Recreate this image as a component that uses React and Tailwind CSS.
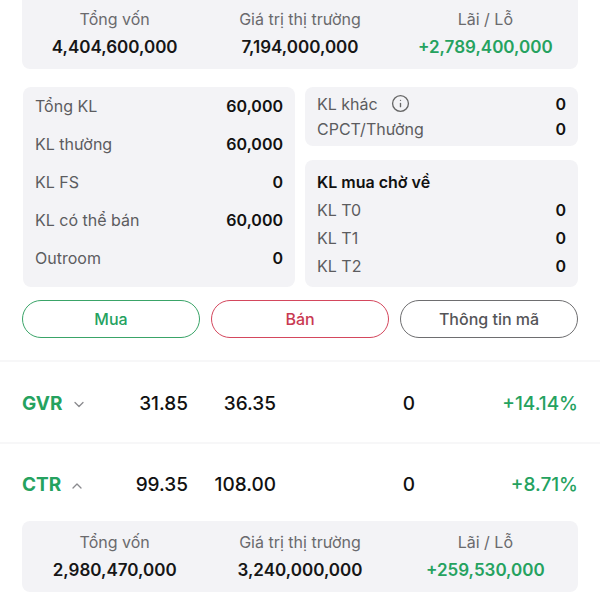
import React from 'react';
import { Info } from 'lucide-react';

const Chevron = ({ up }) => (
  <svg width="10" height="7" viewBox="0 0 10 7" className="ml-[11px]">
    <path d={up ? 'M1 6 L5 2 L9 6' : 'M1 1.5 L5 5.5 L9 1.5'} fill="none" stroke="#8a8a8e" strokeWidth="1.3" strokeLinecap="round" strokeLinejoin="round" />
  </svg>
);

const Summary = ({ von, gia, lai, className }) => (
  <div className={`grid grid-cols-3 bg-[#f3f3f6] ${className}`}>
    {[
      ['Tổng vốn', von, 'text-[#161616]'],
      ['Giá trị thị trường', gia, 'text-[#161616]'],
      ['Lãi / Lỗ', lai, 'text-[#25a25f]'],
    ].map(([label, value, color]) => (
      <div key={label} className="flex flex-col items-center">
        <span className="text-[16px] leading-[22px] text-[#6a6a6d]">{label}</span>
        <span className={`mt-[5px] text-[17px] leading-[24px] font-semibold ${color}`}>{value}</span>
      </div>
    ))}
  </div>
);

const Row = ({ label, value, h }) => (
  <div className={`flex items-center justify-between ${h}`}>
    <span className="text-[16px] text-[#5c5c5f]">{label}</span>
    <span className="text-[16px] font-semibold text-[#111]">{value}</span>
  </div>
);

const StockRow = ({ code, up, p1, p2, pct, className }) => (
  <div className={`flex items-center px-[22px] text-[19px] leading-[24px] ${className}`}>
    <div className="w-[96px] flex items-center">
      <span className="font-bold text-[#25a25f]">{code}</span>
      <Chevron up={up} />
    </div>
    <span className="w-[70px] text-right font-medium text-[#111]">{p1}</span>
    <span className="w-[88px] text-right font-medium text-[#111]">{p2}</span>
    <span className="w-[139px] text-right font-medium text-[#111]">0</span>
    <span className="flex-1 text-right font-medium text-[#25a25f]">{pct}</span>
  </div>
);

export default function App() {
  return (
    <div className="w-[600px] h-[600px] overflow-hidden bg-white font-['Inter',sans-serif]">
      <div className="px-[22px]">
        <Summary von="4,404,600,000" gia="7,194,000,000" lai="+2,789,400,000" className="rounded-b-lg pt-[8px] pb-[10px]" />

        <div className="mt-[18px] grid grid-cols-2 gap-[10px]">
          <div className="bg-[#f3f3f6] rounded-lg px-[12px] pb-[10px] ml-[1px]">
            <Row label="Tổng KL" value="60,000" h="h-[38px]" />
            <Row label="KL thường" value="60,000" h="h-[38px]" />
            <Row label="KL FS" value="0" h="h-[38px]" />
            <Row label="KL có thể bán" value="60,000" h="h-[38px]" />
            <Row label="Outroom" value="0" h="h-[38px]" />
          </div>
          <div className="flex flex-col gap-[14px]">
            <div className="bg-[#f3f3f6] rounded-lg px-[12px] pt-[4px] pb-[5px]">
              <div className="flex items-center justify-between h-[25px]">
                <span className="flex items-center text-[16px] text-[#5c5c5f]">
                  KL khác
                  <Info size={19} strokeWidth={1.7} className="ml-[13px] text-[#666]" />
                </span>
                <span className="text-[16px] font-semibold text-[#111]">0</span>
              </div>
              <Row label="CPCT/Thưởng" value="0" h="h-[25px]" />
            </div>
            <div className="bg-[#f3f3f6] rounded-lg px-[12px] pt-[8px] pb-[7px]">
              <div className="h-[28px] flex items-center text-[16px] font-semibold text-[#111]">KL mua chờ về</div>
              <Row label="KL T0" value="0" h="h-[28px]" />
              <Row label="KL T1" value="0" h="h-[28px]" />
              <Row label="KL T2" value="0" h="h-[28px]" />
            </div>
          </div>
        </div>

        <div className="mt-[13px] grid grid-cols-3 gap-[11px]">
          <button className="h-[38px] rounded-full border-[1.5px] border-[#3aa468] text-[16px] font-medium text-[#25a25f]">Mua</button>
          <button className="h-[38px] rounded-full border-[1.5px] border-[#d4475d] text-[16px] font-medium text-[#c93a52]">Bán</button>
          <button className="h-[38px] rounded-full border-[1.5px] border-[#6e6e70] text-[16px] font-medium text-[#555558]">Thông tin mã</button>
        </div>
      </div>

      <div className="mt-[22px] h-[2px] bg-[#f7f7f8]" />
      <StockRow code="GVR" p1="31.85" p2="36.35" pct="+14.14%" className="h-[80px] pt-[4px]" />
      <div className="h-[2px] bg-[#f7f7f8]" />
      <StockRow code="CTR" up p1="99.35" p2="108.00" pct="+8.71%" className="pt-[29px] pb-[24px]" />

      <div className="px-[22px]">
        <Summary von="2,980,470,000" gia="3,240,000,000" lai="+259,530,000" className="rounded-lg pt-[10px] pb-[10px]" />
      </div>
    </div>
  );
}
